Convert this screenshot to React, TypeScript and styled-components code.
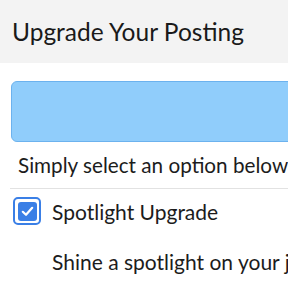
import React from "react";
import styled, { createGlobalStyle } from "styled-components";

const GlobalStyle = createGlobalStyle`
  html, body {
    margin: 0;
    padding: 0;
    background: #ffffff;
    overflow: hidden;
  }
  body {
    font-family: Lato, "Open Sans", sans-serif;
    color: #1c1c1c;
  }
`;

const Page = styled.div`
  width: 420px;
  display: flex;
  flex-direction: column;
`;

const Header = styled.header`
  height: 63px;
  background: #f3f3f3;
  display: flex;
  align-items: center;
  padding-left: 12px;
`;

const Title = styled.h1`
  margin: 0;
  font-size: 24.5px;
  font-weight: 400;
  color: #1a1a1a;
`;

const Body = styled.div`
  padding: 18px 0 0 11px;
  display: flex;
  flex-direction: column;
`;

const Banner = styled.div`
  height: 59px;
  background: #90cdfb;
  border: 1px solid #6cb2ee;
  border-radius: 6px;
`;

const Intro = styled.p`
  margin: 0;
  padding: 9px 0 0 7px;
  height: 37px;
  font-size: 20.7px;
  line-height: 28px;
  white-space: nowrap;
`;

const Divider = styled.hr`
  margin: 0 0 0 -1px;
  border: none;
  border-top: 1px solid #e2e2e2;
`;

const OptionRow = styled.label`
  display: flex;
  align-items: center;
  gap: 11px;
  padding: 8px 0 0 2px;
  font-size: 21px;
`;

const CheckRing = styled.span`
  width: 24px;
  height: 24px;
  border: 2px solid #3a7fe6;
  border-radius: 5px;
  display: flex;
  align-items: center;
  justify-content: center;
  flex-shrink: 0;
`;

const CheckBox = styled.span<{ $checked: boolean }>`
  width: 19px;
  height: 19px;
  border-radius: 3px;
  background: ${(p) => (p.$checked ? "#3a7fe6" : "#ffffff")};
  display: flex;
  align-items: center;
  justify-content: center;
`;

const Description = styled.p`
  margin: 0;
  padding: 23px 0 0 41px;
  font-size: 21px;
  line-height: 28px;
  white-space: nowrap;
`;

const Check = () => (
  <svg width="13" height="11" viewBox="0 0 13 11" fill="none">
    <path
      d="M1.8 5.8 L5 8.8 L11.2 1.8"
      stroke="#ffffff"
      strokeWidth="2.2"
      strokeLinecap="round"
      strokeLinejoin="round"
    />
  </svg>
);

export default function App() {
  return (
    <Page>
      <GlobalStyle />
      <Header>
        <Title>Upgrade Your Posting</Title>
      </Header>
      <Body>
        <Banner />
        <Intro>Simply select an option below</Intro>
        <Divider />
        <OptionRow>
          <CheckRing>
            <CheckBox $checked>
              <Check />
            </CheckBox>
          </CheckRing>
          Spotlight Upgrade
        </OptionRow>
        <Description>Shine a spotlight on your job posting.</Description>
      </Body>
    </Page>
  );
}
